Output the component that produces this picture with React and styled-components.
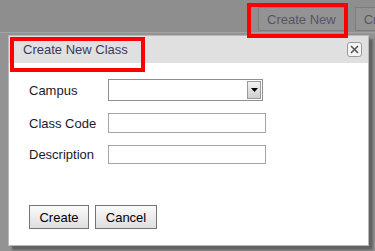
import React from 'react';
import styled, { createGlobalStyle } from 'styled-components';

const GlobalStyle = createGlobalStyle`
  html, body {
    margin: 0;
    padding: 0;
    background: #929292;
    font-family: 'Liberation Sans', Arial, sans-serif;
    overflow: hidden;
  }
`;

const Page = styled.div`
  position: relative;
  width: 375px;
  height: 251px;
  overflow: hidden;
  background: #939393;
`;

const TopBar = styled.div`
  height: 33px;
  box-sizing: border-box;
  display: flex;
  gap: 10px;
  padding: 7px 0 0 258px;
  background: #8e8e8e;
  border-bottom: 1px solid #a3a3a3;
  white-space: nowrap;
`;

const BarButton = styled.button`
  flex: none;
  height: 24px;
  padding: 0 8px;
  font-family: inherit;
  font-size: 13px;
  color: #55556a;
  background: #939393;
  border: 1px solid #7d7d7d;
  border-radius: 0;
`;

const Backdrop = styled.div`
  padding: 2px 0 0 8px;
`;

const Dialog = styled.div`
  width: 361px;
  height: 211px;
  box-sizing: border-box;
  background: #fff;
  border: 1px solid #b8b8b8;
  box-shadow: 4px 4px 2px rgba(40, 40, 40, 0.45);
  display: flex;
  flex-direction: column;
`;

const TitleBar = styled.div`
  height: 27px;
  flex: none;
  display: flex;
  align-items: center;
  justify-content: space-between;
  padding: 0 6px 0 14px;
  background: #e0e0e0;
`;

const Title = styled.span`
  font-size: 13px;
  color: #3a3a5a;
`;

const CloseButton = styled.button`
  width: 15px;
  height: 15px;
  padding: 0;
  display: flex;
  align-items: center;
  justify-content: center;
  background: #f5f5f5;
  border: 1px solid #9a9a9a;
  border-radius: 3px;
  color: #555;
`;

const Body = styled.div`
  flex: 1;
  display: flex;
  flex-direction: column;
  padding: 16px 0 0 20px;
`;

const Form = styled.div`
  display: grid;
  grid-template-columns: 79px auto;
  row-gap: 12px;
  align-items: center;
`;

const Label = styled.label`
  font-size: 13px;
  color: #1a1a2a;
`;

const Input = styled.input`
  width: 158px;
  height: ${(p) => p.$h || 20}px;
  box-sizing: border-box;
  border: 1px solid #a5a5a5;
  padding: 0 3px;
  font-family: inherit;
  font-size: 13px;
`;

const Select = styled.div`
  width: 155px;
  height: 22px;
  box-sizing: border-box;
  display: flex;
  justify-content: flex-end;
  border: 1px solid #8f8f8f;
  padding: 1px;
`;

const Arrow = styled.div`
  width: 14px;
  display: flex;
  align-items: center;
  justify-content: center;
  background: linear-gradient(#f2f2f2, #cfcfcf);
  border: 1px solid #9a9a9a;
  box-sizing: border-box;
`;

const Actions = styled.div`
  display: flex;
  gap: 6px;
  margin-top: 41px;
`;

const Button = styled.button`
  width: ${(p) => p.$w}px;
  height: 24px;
  padding: 0;
  font-family: inherit;
  font-size: 13px;
  color: #000;
  background: linear-gradient(#fafafa, #dedede);
  border: 1px solid #747474;
  border-radius: 0;
`;

// red annotation boxes drawn over the screenshot
const Highlight = styled.div`
  position: absolute;
  left: ${(p) => p.$x}px;
  top: ${(p) => p.$y}px;
  width: ${(p) => p.$w}px;
  height: ${(p) => p.$h}px;
  box-sizing: border-box;
  border: 4px solid #ff0000;
  pointer-events: none;
`;

const App = () => (
  <Page>
    <GlobalStyle />
    <TopBar>
      <BarButton>Create New</BarButton>
      <BarButton>Create Bulk</BarButton>
    </TopBar>
    <Backdrop>
      <Dialog>
        <TitleBar>
          <Title>Create New Class</Title>
          <CloseButton aria-label='close'>
            <svg width='9' height='9' viewBox='0 0 9 9'>
              <path d='M1 1L8 8M8 1L1 8' stroke='#555' strokeWidth='1.6' />
            </svg>
          </CloseButton>
        </TitleBar>
        <Body>
          <Form>
            <Label>Campus</Label>
            <Select>
              <Arrow>
                <svg width='7' height='4' viewBox='0 0 7 4'>
                  <path d='M0 0H7L3.5 4Z' fill='#000' />
                </svg>
              </Arrow>
            </Select>
            <Label>Class Code</Label>
            <Input />
            <Label>Description</Label>
            <Input $h={19} />
          </Form>
          <Actions>
            <Button $w={60}>Create</Button>
            <Button $w={62}>Cancel</Button>
          </Actions>
        </Body>
      </Dialog>
    </Backdrop>
    <Highlight $x={247} $y={3} $w={101} $h={35} />
    <Highlight $x={10} $y={37} $w={135} $h={35} />
  </Page>
);

export default App;
